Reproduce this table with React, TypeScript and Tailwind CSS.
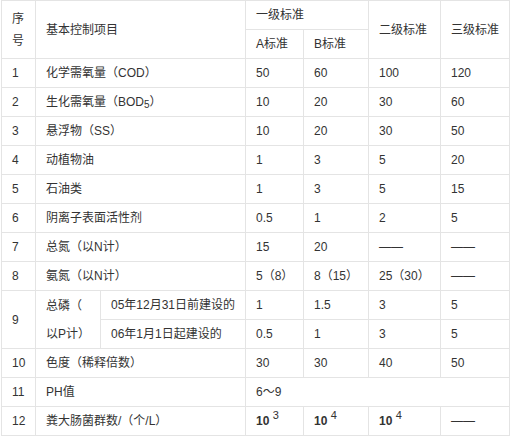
import type { ReactNode } from 'react';

type CellProps = {
  children?: ReactNode;
  className?: string;
};

function Cell({ children, className = '' }: CellProps) {
  return (
    <div className={`flex items-center bg-white pl-[10px] pr-[4px] ${className}`}>
      {children}
    </div>
  );
}

function Pow({ base, exp }: { base: string; exp: string }) {
  return (
    <span className="whitespace-nowrap">
      <b className="font-bold">{base}</b>{' '}
      <sup className="relative -top-[1px] align-super text-[11px]">{exp}</sup>
    </span>
  );
}

const dash = '——';

// rows 1..8 share the same shape: number, name, four values
const simpleRows: Array<[string, ReactNode, string, string, string, string]> = [
  ['1', '化学需氧量（COD）', '50', '60', '100', '120'],
  [
    '2',
    <>
      生化需氧量（BOD<sub className="text-[10px] align-sub">5</sub>）
    </>,
    '10',
    '20',
    '30',
    '60',
  ],
  ['3', '悬浮物（SS）', '10', '20', '30', '50'],
  ['4', '动植物油', '1', '3', '5', '20'],
  ['5', '石油类', '1', '3', '5', '15'],
  ['6', '阴离子表面活性剂', '0.5', '1', '2', '5'],
  ['7', '总氮（以N计）', '15', '20', dash, dash],
  ['8', '氨氮（以N计）', '5（8）', '8（15）', '25（30）', dash],
];

export default function App() {
  return (
    <div
      className="h-[436px] w-[510px] overflow-hidden bg-white text-[12px] leading-[16px] text-[#333333]"
      style={{ fontFamily: '"Liberation Sans", Arial, "Noto Sans CJK SC", sans-serif' }}
    >
      <div className="ml-px grid w-[509px] grid-cols-[33px_64px_144px_57px_64px_71px_68px] grid-rows-[repeat(15,28px)] gap-px bg-[#e4e4e4] p-px">
        {/* header */}
        <Cell className="row-span-2 leading-[22px]">序号</Cell>
        <Cell className="col-span-2 row-span-2">基本控制项目</Cell>
        <Cell className="col-span-2">一级标准</Cell>
        <Cell className="row-span-2">二级标准</Cell>
        <Cell className="row-span-2">三级标准</Cell>
        <Cell>A标准</Cell>
        <Cell>B标准</Cell>

        {simpleRows.map(([n, name, a, b, c, d]) => (
          <Row key={n} n={n} name={name} vals={[a, b, c, d]} />
        ))}

        {/* row 9: split by construction date */}
        <Cell className="row-span-2">9</Cell>
        <Cell className="row-span-2 leading-[28px]">
          <span>
            总磷（
            <br />
            以P计）
          </span>
        </Cell>
        <Cell className="whitespace-nowrap">05年12月31日前建设的</Cell>
        <Cell>1</Cell>
        <Cell>1.5</Cell>
        <Cell>3</Cell>
        <Cell>5</Cell>
        <Cell className="whitespace-nowrap">06年1月1日起建设的</Cell>
        <Cell>0.5</Cell>
        <Cell>1</Cell>
        <Cell>3</Cell>
        <Cell>5</Cell>

        <Row n="10" name="色度（稀释倍数）" vals={['30', '30', '40', '50']} />

        <Cell>11</Cell>
        <Cell className="col-span-2">PH值</Cell>
        <Cell className="col-span-4">6～9</Cell>

        <Cell>12</Cell>
        <Cell className="col-span-2">粪大肠菌群数/（个/L）</Cell>
        <Cell>
          <Pow base="10" exp="3" />
        </Cell>
        <Cell>
          <Pow base="10" exp="4" />
        </Cell>
        <Cell>
          <Pow base="10" exp="4" />
        </Cell>
        <Cell>{dash}</Cell>
      </div>
    </div>
  );
}

function Row({ n, name, vals }: { n: string; name: ReactNode; vals: string[] }) {
  return (
    <>
      <Cell>{n}</Cell>
      <Cell className="col-span-2">{name}</Cell>
      {vals.map((v, i) => (
        <Cell key={i} className="whitespace-nowrap">
          {v}
        </Cell>
      ))}
    </>
  );
}
